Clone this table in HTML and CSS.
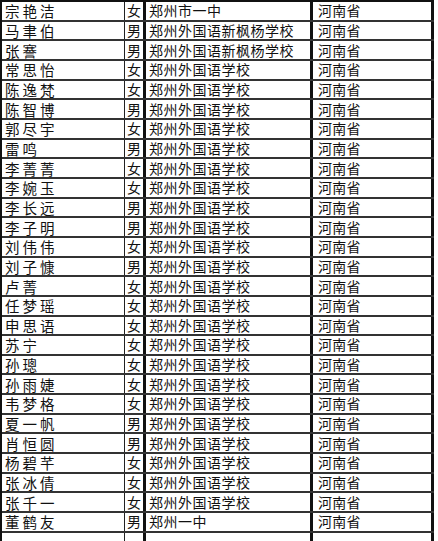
FILE: index.html
```html
<!DOCTYPE html>
<html lang="zh">
<head>
<meta charset="utf-8">
<link rel="stylesheet" href="styles.css">
</head>
<body>
<div class="sheet">
  <div class="row"><span class="c name">宗艳洁</span><span class="c sex">女</span><span class="c school">郑州市一中</span><span class="c prov">河南省</span></div>
  <div class="row"><span class="c name">马聿伯</span><span class="c sex">男</span><span class="c school">郑州外国语新枫杨学校</span><span class="c prov">河南省</span></div>
  <div class="row"><span class="c name">张謇</span><span class="c sex">男</span><span class="c school">郑州外国语新枫杨学校</span><span class="c prov">河南省</span></div>
  <div class="row"><span class="c name">常思怡</span><span class="c sex">女</span><span class="c school">郑州外国语学校</span><span class="c prov">河南省</span></div>
  <div class="row"><span class="c name">陈逸梵</span><span class="c sex">女</span><span class="c school">郑州外国语学校</span><span class="c prov">河南省</span></div>
  <div class="row"><span class="c name">陈智博</span><span class="c sex">男</span><span class="c school">郑州外国语学校</span><span class="c prov">河南省</span></div>
  <div class="row"><span class="c name">郭尽宇</span><span class="c sex">女</span><span class="c school">郑州外国语学校</span><span class="c prov">河南省</span></div>
  <div class="row"><span class="c name">雷鸣</span><span class="c sex">男</span><span class="c school">郑州外国语学校</span><span class="c prov">河南省</span></div>
  <div class="row"><span class="c name">李菁菁</span><span class="c sex">女</span><span class="c school">郑州外国语学校</span><span class="c prov">河南省</span></div>
  <div class="row"><span class="c name">李婉玉</span><span class="c sex">女</span><span class="c school">郑州外国语学校</span><span class="c prov">河南省</span></div>
  <div class="row"><span class="c name">李长远</span><span class="c sex">男</span><span class="c school">郑州外国语学校</span><span class="c prov">河南省</span></div>
  <div class="row"><span class="c name">李子明</span><span class="c sex">男</span><span class="c school">郑州外国语学校</span><span class="c prov">河南省</span></div>
  <div class="row"><span class="c name">刘伟伟</span><span class="c sex">女</span><span class="c school">郑州外国语学校</span><span class="c prov">河南省</span></div>
  <div class="row"><span class="c name">刘子慷</span><span class="c sex">男</span><span class="c school">郑州外国语学校</span><span class="c prov">河南省</span></div>
  <div class="row"><span class="c name">卢菁</span><span class="c sex">女</span><span class="c school">郑州外国语学校</span><span class="c prov">河南省</span></div>
  <div class="row"><span class="c name">任梦瑶</span><span class="c sex">女</span><span class="c school">郑州外国语学校</span><span class="c prov">河南省</span></div>
  <div class="row"><span class="c name">申思语</span><span class="c sex">女</span><span class="c school">郑州外国语学校</span><span class="c prov">河南省</span></div>
  <div class="row"><span class="c name">苏宁</span><span class="c sex">女</span><span class="c school">郑州外国语学校</span><span class="c prov">河南省</span></div>
  <div class="row"><span class="c name">孙璁</span><span class="c sex">女</span><span class="c school">郑州外国语学校</span><span class="c prov">河南省</span></div>
  <div class="row"><span class="c name">孙雨婕</span><span class="c sex">女</span><span class="c school">郑州外国语学校</span><span class="c prov">河南省</span></div>
  <div class="row"><span class="c name">韦梦格</span><span class="c sex">女</span><span class="c school">郑州外国语学校</span><span class="c prov">河南省</span></div>
  <div class="row"><span class="c name">夏一帆</span><span class="c sex">男</span><span class="c school">郑州外国语学校</span><span class="c prov">河南省</span></div>
  <div class="row"><span class="c name">肖恒圆</span><span class="c sex">男</span><span class="c school">郑州外国语学校</span><span class="c prov">河南省</span></div>
  <div class="row"><span class="c name">杨碧芊</span><span class="c sex">女</span><span class="c school">郑州外国语学校</span><span class="c prov">河南省</span></div>
  <div class="row"><span class="c name">张冰倩</span><span class="c sex">女</span><span class="c school">郑州外国语学校</span><span class="c prov">河南省</span></div>
  <div class="row"><span class="c name">张千一</span><span class="c sex">女</span><span class="c school">郑州外国语学校</span><span class="c prov">河南省</span></div>
  <div class="row"><span class="c name">董鹤友</span><span class="c sex">男</span><span class="c school">郑州一中</span><span class="c prov">河南省</span></div>
  <div class="row"><span class="c name"></span><span class="c sex"></span><span class="c school"></span><span class="c prov"></span></div>
</div>
</body>
</html>
```

FILE: styles.css
```css
html, body {
  margin: 0;
  padding: 0;
  background: #fff;
}
body {
  width: 438px;
  height: 541px;
  overflow: hidden;
  font-family: "Noto Sans CJK SC", "Noto Sans", sans-serif;
  color: #111;
}
.sheet {
  width: 434px;
  border-top: 2px solid #111;
  border-left: 2px solid #111;
  box-sizing: border-box;
}
.row {
  display: grid;
  grid-template-columns: 123px 21px 167px 121px;
  height: 19.67px;
  box-sizing: border-box;
  border-bottom: 2px solid #333;
}
.c {
  display: flex;
  align-items: center;
  box-sizing: border-box;
  padding-left: 3px;
  font-size: 14px;
  line-height: 17px;
  white-space: nowrap;
  border-right: 3px solid #111;
}
.name {
  font-size: 14.5px;
  letter-spacing: 3px;
  border-right: 1px solid #222;
}
.sex {
  padding-left: 2px;
}
.school {
  letter-spacing: 0.5px;
}
.prov {
  padding-left: 5px;
  letter-spacing: 0.3px;
}
```
